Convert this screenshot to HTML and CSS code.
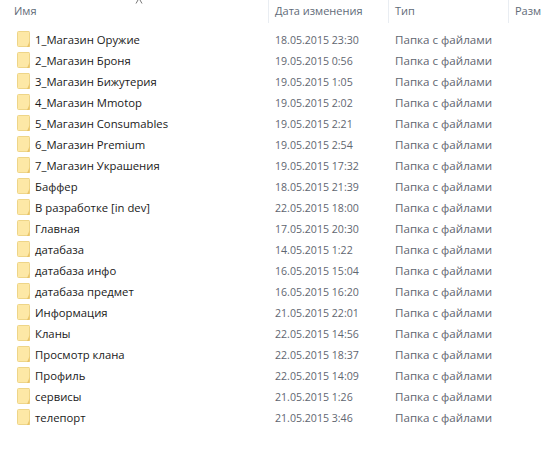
FILE: index.html
```html
<!DOCTYPE html>
<html lang="ru">
<head>
<meta charset="utf-8">
<title>Проводник</title>
<link rel="stylesheet" href="styles.css">
</head>
<body>
<svg width="0" height="0" class="defs"><defs>
<symbol id="folder" viewBox="0 0 14 17">
<path d="M.5 1.5 Q.5.5 1.5.5H12Q12.5.5 12.5 1.5V15.5H1.5Q.5 15.5.5 14.5Z" fill="#fde8a6" stroke="#eed588"/>
<path d="M12.5 10V16H10Q11.7 13 12.5 10Z" fill="#eac468"/>
</symbol>
</defs></svg>
<svg class="frag" width="8" height="4" viewBox="0 0 8 4"><path d="M3 0 1 3.5M5 0 7 3.5" fill="none" stroke="#777" stroke-width="1"/></svg>
<header class="head">
<div class="col c1">Имя</div>
<div class="col c2">Дата изменения</div>
<div class="col c3">Тип</div>
<div class="col c4">Разм</div>
</header>
<main class="list">
<div class="row"><div class="name"><svg class="ico"><use href="#folder"/></svg>1_Магазин Оружие</div><div class="date">18.05.2015 23:30</div><div class="type">Папка с файлами</div></div>
<div class="row"><div class="name"><svg class="ico"><use href="#folder"/></svg>2_Магазин Броня</div><div class="date">19.05.2015 0:56</div><div class="type">Папка с файлами</div></div>
<div class="row"><div class="name"><svg class="ico"><use href="#folder"/></svg>3_Магазин Бижутерия</div><div class="date">19.05.2015 1:05</div><div class="type">Папка с файлами</div></div>
<div class="row"><div class="name"><svg class="ico"><use href="#folder"/></svg>4_Магазин Mmotop</div><div class="date">19.05.2015 2:02</div><div class="type">Папка с файлами</div></div>
<div class="row"><div class="name"><svg class="ico"><use href="#folder"/></svg>5_Магазин Consumables</div><div class="date">19.05.2015 2:21</div><div class="type">Папка с файлами</div></div>
<div class="row"><div class="name"><svg class="ico"><use href="#folder"/></svg>6_Магазин Premium</div><div class="date">19.05.2015 2:54</div><div class="type">Папка с файлами</div></div>
<div class="row"><div class="name"><svg class="ico"><use href="#folder"/></svg>7_Магазин Украшения</div><div class="date">19.05.2015 17:32</div><div class="type">Папка с файлами</div></div>
<div class="row"><div class="name"><svg class="ico"><use href="#folder"/></svg>Баффер</div><div class="date">18.05.2015 21:39</div><div class="type">Папка с файлами</div></div>
<div class="row"><div class="name"><svg class="ico"><use href="#folder"/></svg>В разработке [in dev]</div><div class="date">22.05.2015 18:00</div><div class="type">Папка с файлами</div></div>
<div class="row"><div class="name"><svg class="ico"><use href="#folder"/></svg>Главная</div><div class="date">17.05.2015 20:30</div><div class="type">Папка с файлами</div></div>
<div class="row"><div class="name"><svg class="ico"><use href="#folder"/></svg>датабаза</div><div class="date">14.05.2015 1:22</div><div class="type">Папка с файлами</div></div>
<div class="row"><div class="name"><svg class="ico"><use href="#folder"/></svg>датабаза инфо</div><div class="date">16.05.2015 15:04</div><div class="type">Папка с файлами</div></div>
<div class="row"><div class="name"><svg class="ico"><use href="#folder"/></svg>датабаза предмет</div><div class="date">16.05.2015 16:20</div><div class="type">Папка с файлами</div></div>
<div class="row"><div class="name"><svg class="ico"><use href="#folder"/></svg>Информация</div><div class="date">21.05.2015 22:01</div><div class="type">Папка с файлами</div></div>
<div class="row"><div class="name"><svg class="ico"><use href="#folder"/></svg>Кланы</div><div class="date">22.05.2015 14:56</div><div class="type">Папка с файлами</div></div>
<div class="row"><div class="name"><svg class="ico"><use href="#folder"/></svg>Просмотр клана</div><div class="date">22.05.2015 18:37</div><div class="type">Папка с файлами</div></div>
<div class="row"><div class="name"><svg class="ico"><use href="#folder"/></svg>Профиль</div><div class="date">22.05.2015 14:09</div><div class="type">Папка с файлами</div></div>
<div class="row"><div class="name"><svg class="ico"><use href="#folder"/></svg>сервисы</div><div class="date">21.05.2015 1:26</div><div class="type">Папка с файлами</div></div>
<div class="row"><div class="name"><svg class="ico"><use href="#folder"/></svg>телепорт</div><div class="date">21.05.2015 3:46</div><div class="type">Папка с файлами</div></div>
</main>
</body>
</html>
```
FILE: styles.css
```css
html, body { margin: 0; padding: 0; height: 100%; overflow: hidden; background: #fff; }
body { position: relative; font-family: "Open Sans", "Noto Sans", sans-serif; font-size: 11.3px; color: #1a1a1a; }
.defs { position: absolute; }
.frag { position: absolute; left: 135px; top: 0; }
.head { display: grid; grid-template-columns: 269px 120px 120px 32px; height: 23px; color: #5f6b78; font-size: 11px; overflow: hidden; }
.col { padding-left: 6px; border-right: 1px solid #e9edf2; line-height: 21px; white-space: nowrap; }
.c1 { padding-left: 14px; }
.c4 { border-right: 0; }
.list { padding-top: 6px; }
.row { display: grid; grid-template-columns: 275px 120px 146px; height: 21px; align-items: center; white-space: nowrap; }
.name { display: flex; align-items: center; padding-left: 17px; gap: 4px; }
.ico { width: 14px; height: 17px; flex: none; }
.date, .type { color: #5f6670; }
.date { font-size: 10.6px; }
.type { font-size: 11.6px; }
```
